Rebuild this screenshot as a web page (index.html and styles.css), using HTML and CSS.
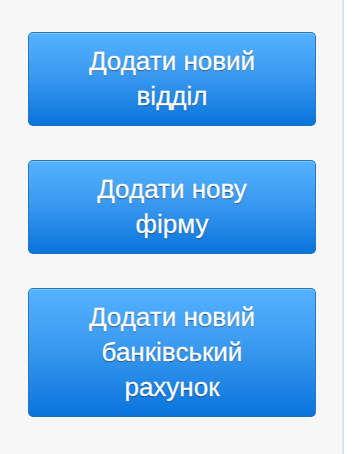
FILE: index.html
```html
<!doctype html>
<html>
<head>
 <meta http-equiv="Content-Type" content="text/html; charset=utf-8">
 <title>Довідники</title>
 <link rel="stylesheet" href="styles.css">
</head>
<body>
  <div id="sidebar">
    <ul class="actions">
      <li><button class="btn">Додати новий<br/>відділ</button></li>
      <li><button class="btn">Додати нову<br/>фірму</button></li>
      <li><button class="btn">Додати новий<br/>банківський<br/>рахунок</button></li>
    </ul>
  </div>
</body>
</html>
```

FILE: styles.css
```css
html,body{margin:0;padding:0;height:100%;background-color:#fff;}
body,ul,li,button{margin:0;padding:0;font-family:'Liberation Sans',Arial,sans-serif;}
ul{list-style:none;}
#sidebar{width:342px;height:100%;background-color:#f7f7f7;border-right:2px solid #dbe4ee;}
#sidebar .actions{padding:32px 0 0 28px;display:flex;flex-direction:column;gap:34px;}
#sidebar .actions li{width:288px;}
.btn{display:block;width:100%;padding:11px 0;border:1px solid #2579c4;border-bottom-color:#1c6cb8;border-radius:5px;background:linear-gradient(to bottom,#55b2ff 0%,#3a9af0 45%,#0a74dd 100%);box-shadow:inset 0 1px 0 rgba(255,255,255,.25);color:#fff;font-size:26px;line-height:35px;text-align:center;text-shadow:0 1px 1px rgba(0,0,0,.5);-webkit-text-stroke:.3px #fff;cursor:pointer;}
```
